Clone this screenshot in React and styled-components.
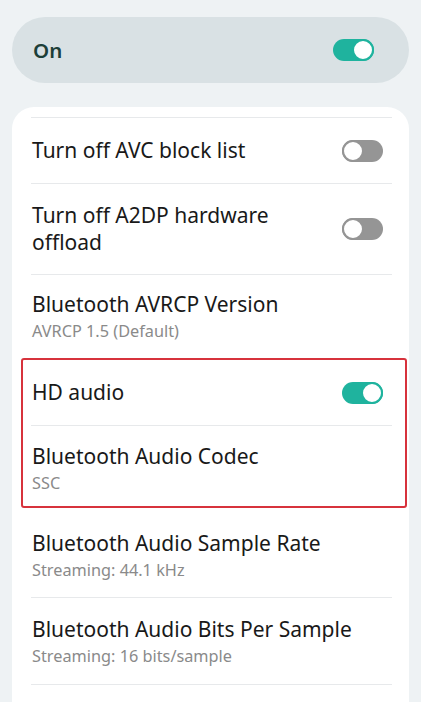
import React from 'react'
import styled, { createGlobalStyle } from 'styled-components'

const GlobalStyle = createGlobalStyle`
  html, body {
    margin: 0;
    padding: 0;
    background: #eef2f4;
  }
  body {
    font-family: 'Noto Sans', Roboto, sans-serif;
    -webkit-font-smoothing: antialiased;
  }
`

const Page = styled.div`
  padding: 17px 12px 0;
  height: 702px;
  box-sizing: border-box;
  overflow: hidden;
  display: flex;
  flex-direction: column;
  gap: 24px;
`

const MasterBar = styled.div`
  height: 66px;
  border-radius: 33px;
  background: #d9e1e4;
  display: flex;
  align-items: center;
  justify-content: space-between;
  padding: 0 26px 0 21px;
  span {
    font-size: 20.5px;
    font-weight: 600;
    color: #1d3f39;
  }
`

const Card = styled.div`
  background: #ffffff;
  border-radius: 22px 22px 0 0;
  padding: 10px 17px 0 19px;
  flex: 1;
`

const Divider = styled.div`
  height: 1px;
  background: #e7e9eb;
`

const Row = styled.div`
  display: flex;
  align-items: center;
  justify-content: space-between;
  gap: 16px;
  min-height: 65px;
  box-sizing: border-box;
  padding: ${(p) => p.$pt || 0}px 0 ${(p) => p.$pb || 0}px 1px;
`

const Texts = styled.div`
  display: flex;
  flex-direction: column;
  min-width: 0;
  max-width: ${(p) => (p.$narrow ? '280px' : 'none')};
`

const Title = styled.div`
  font-size: 21px;
  line-height: 27px;
  color: #191919;
`

const Summary = styled.div`
  margin-top: 2px;
  font-size: 16.3px;
  line-height: 22px;
  color: #8a8a8a;
`

const Highlight = styled.div`
  margin: 0 -15px 0 -10px;
  padding: 0 13px 0 8px;
  border: 2px solid #d7323c;
  border-radius: 3px;
`

const Track = styled.div`
  flex-shrink: 0;
  width: 41px;
  height: 22px;
  border-radius: 11px;
  background: ${(p) => (p.$on ? '#1fb39e' : '#959595')};
  display: flex;
  justify-content: ${(p) => (p.$on ? 'flex-end' : 'flex-start')};
  margin-right: 9px;
`

const Knob = styled.div`
  width: 22px;
  height: 22px;
  box-sizing: border-box;
  border-radius: 50%;
  background: #ffffff;
  border: 2.5px solid ${(p) => (p.$on ? '#1fb39e' : '#959595')};
`

const Toggle = ({ on }) => (
  <Track $on={on}>
    <Knob $on={on} />
  </Track>
)

const App = () => {
  return (
    <>
      <GlobalStyle />
      <Page>
        <MasterBar>
          <span>On</span>
          <Toggle on />
        </MasterBar>
        <Card>
          <Divider />
          <Row>
            <Title>Turn off AVC block list</Title>
            <Toggle />
          </Row>
          <Divider />
          <Row $pt={18} $pb={18}>
            <Texts $narrow>
              <Title>Turn off A2DP hardware offload</Title>
            </Texts>
            <Toggle />
          </Row>
          <Divider />
          <Row $pt={16} $pb={16}>
            <Texts>
              <Title>Bluetooth AVRCP Version</Title>
              <Summary>AVRCP 1.5 (Default)</Summary>
            </Texts>
          </Row>
          <Highlight>
            <Row>
              <Title>HD audio</Title>
              <Toggle on />
            </Row>
            <Divider />
            <Row $pt={17} $pb={12}>
              <Texts>
                <Title>Bluetooth Audio Codec</Title>
                <Summary>SSC</Summary>
              </Texts>
            </Row>
          </Highlight>
          <Row $pt={22} $pb={16}>
            <Texts>
              <Title>Bluetooth Audio Sample Rate</Title>
              <Summary>Streaming: 44.1 kHz</Summary>
            </Texts>
          </Row>
          <Divider />
          <Row $pt={18} $pb={17}>
            <Texts>
              <Title>Bluetooth Audio Bits Per Sample</Title>
              <Summary>Streaming: 16 bits/sample</Summary>
            </Texts>
          </Row>
          <Divider />
        </Card>
      </Page>
    </>
  )
}

export default App
